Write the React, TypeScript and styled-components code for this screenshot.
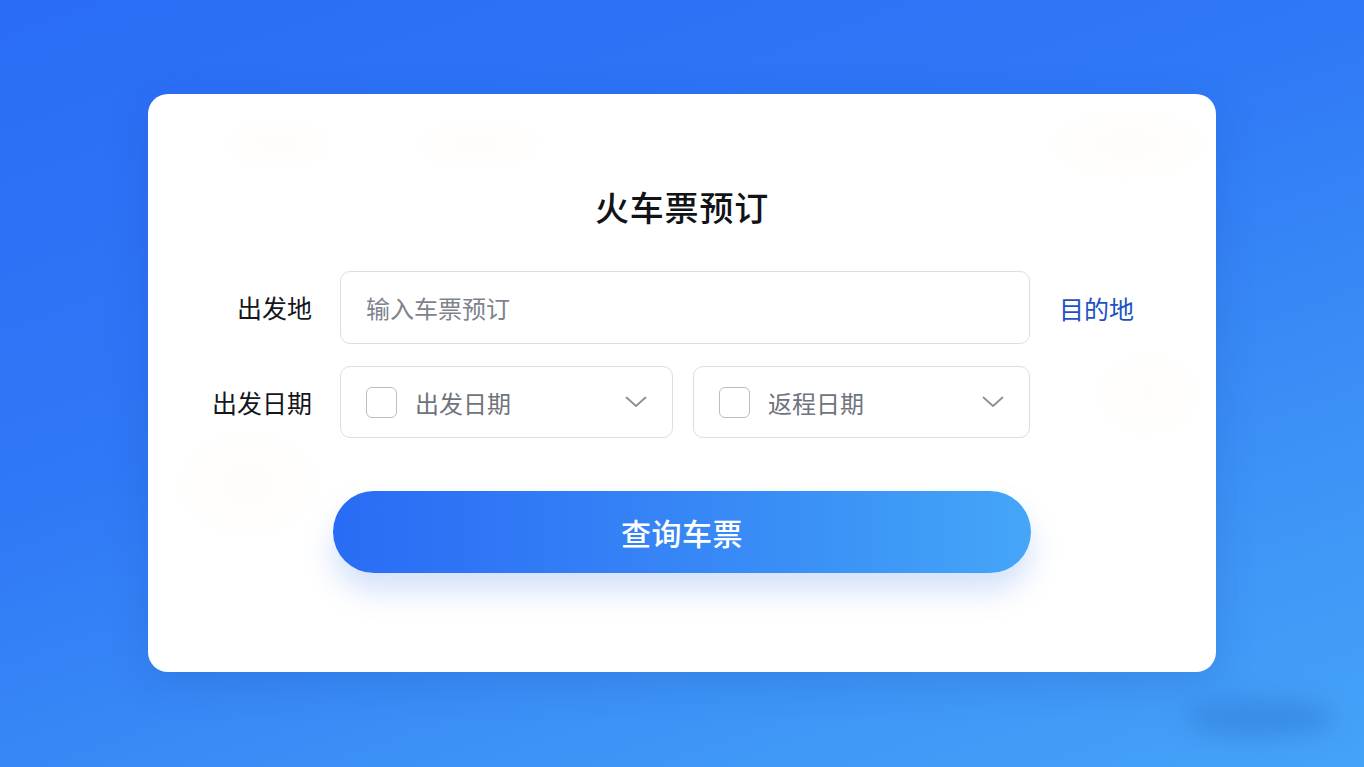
import React from "react";
import styled, { createGlobalStyle } from "styled-components";

const GlobalStyle = createGlobalStyle`
  html, body {
    margin: 0;
    padding: 0;
    height: 100%;
  }
  body {
    font-family: "Noto Sans CJK SC", "Noto Sans", sans-serif;
  }
  #root {
    height: 100%;
  }
`;

const Page = styled.div`
  position: relative;
  width: 100%;
  height: 767px;
  overflow: hidden;
  background: linear-gradient(160deg, #2a6cf6 0%, #2f78f6 40%, #3d93f6 75%, #46a3f8 100%);
  display: flex;
  align-items: flex-start;
  justify-content: center;
  padding-top: 94px;
  box-sizing: border-box;

  /* soft shadow blob at the lower right */
  &::after {
    content: "";
    position: absolute;
    left: 1185px;
    top: 700px;
    width: 150px;
    height: 36px;
    border-radius: 50%;
    background: rgba(40, 110, 200, 0.4);
    filter: blur(12px);
  }
`;

const Card = styled.div`
  position: relative;
  width: 1068px;
  height: 578px;
  box-sizing: border-box;
  background:
    radial-gradient(ellipse 60px 30px at 130px 50px, rgba(255, 226, 180, 0.08), transparent),
    radial-gradient(ellipse 70px 30px at 330px 50px, rgba(255, 226, 180, 0.08), transparent),
    radial-gradient(ellipse 90px 40px at 980px 50px, rgba(255, 226, 180, 0.08), transparent),
    radial-gradient(ellipse 80px 60px at 100px 390px, rgba(255, 226, 180, 0.08), transparent),
    radial-gradient(ellipse 60px 50px at 1000px 300px, rgba(255, 226, 180, 0.06), transparent),
    #ffffff;
  border-radius: 20px;
  box-shadow: 0 10px 40px rgba(20, 60, 160, 0.18);
  padding-top: 89px;
  display: flex;
  flex-direction: column;
  align-items: stretch;
`;

const Title = styled.h1`
  margin: 0;
  text-align: center;
  font-size: 34px;
  line-height: 48px;
  font-weight: 500;
  color: #111318;
  letter-spacing: 0.8px;
`;

const Form = styled.div`
  margin-top: 40px;
  display: grid;
  grid-template-columns: 192px 690px 1fr;
  row-gap: 22px;
  align-items: center;
`;

const Label = styled.div`
  text-align: right;
  padding-right: 28px;
  font-size: 25px;
  color: #15171c;
  line-height: 1;
`;

const FieldBox = styled.div`
  height: 73px;
  box-sizing: border-box;
  border: 1px solid #dcdee2;
  border-radius: 10px;
  background: rgba(255, 255, 255, 0.9);
  display: flex;
  align-items: center;
`;

const TextInput = styled(FieldBox).attrs({ as: "label" })`
  padding: 0 25px;
  font-size: 24px;
  color: #7e838c;
`;

const Link = styled.a`
  padding-left: 29px;
  font-size: 25px;
  color: #1d52c4;
  text-decoration: none;
  cursor: pointer;
`;

const DateRow = styled.div`
  display: grid;
  grid-template-columns: 333px 337px;
  column-gap: 20px;
`;

const DateBox = styled(FieldBox)`
  height: 72px;
  padding: 0 25px;
  gap: 18px;
  font-size: 24px;
  color: #6f747c;
`;

const Check = styled.span`
  width: 31px;
  height: 31px;
  box-sizing: border-box;
  border: 1.5px solid #b9bdc4;
  border-radius: 6px;
  flex: none;
`;

const DateText = styled.span`
  flex: 1;
`;

const Chevron = styled.svg`
  width: 22px;
  height: 12px;
  flex: none;
`;

const Submit = styled.button`
  margin: 53px auto 0;
  width: 698px;
  height: 82px;
  border: none;
  border-radius: 41px;
  background: linear-gradient(90deg, #286cf5 0%, #337df6 35%, #3b92f6 70%, #45a6f8 100%);
  box-shadow: 0 18px 30px rgba(60, 120, 230, 0.22);
  color: #ffffff;
  font-family: "Noto Sans CJK SC", "Noto Sans", sans-serif;
  font-size: 30px;
  font-weight: 500;
  letter-spacing: 0.5px;
  cursor: pointer;
`;

function DatePicker({ placeholder }: { placeholder: string }) {
  return (
    <DateBox>
      <Check />
      <DateText>{placeholder}</DateText>
      <Chevron viewBox="0 0 22 12" fill="none">
        <polyline
          points="1.5,1.5 11,10 20.5,1.5"
          stroke="#8a8f97"
          strokeWidth="1.8"
          strokeLinecap="round"
          strokeLinejoin="round"
        />
      </Chevron>
    </DateBox>
  );
}

export default function App() {
  return (
    <>
      <GlobalStyle />
      <Page>
        <Card>
          <Title>火车票预订</Title>
          <Form>
            <Label>出发地</Label>
            <TextInput>输入车票预订</TextInput>
            <Link>目的地</Link>

            <Label>出发日期</Label>
            <DateRow>
              <DatePicker placeholder="出发日期" />
              <DatePicker placeholder="返程日期" />
            </DateRow>
            <div />
          </Form>
          <Submit>查询车票</Submit>
        </Card>
      </Page>
    </>
  );
}
